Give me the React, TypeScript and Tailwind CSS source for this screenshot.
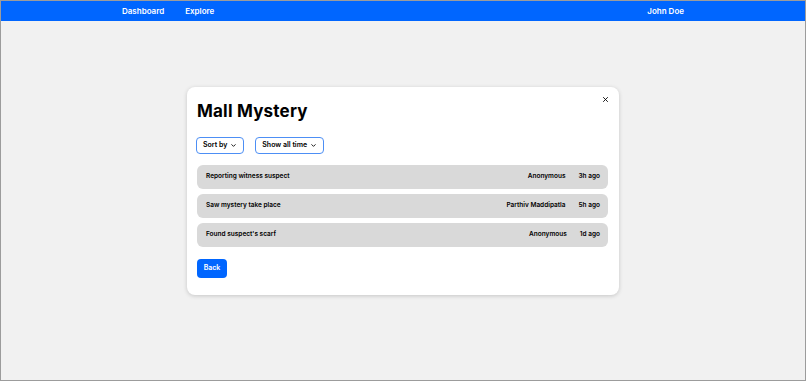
import React from 'react'

const rows = [
  { title: 'Reporting witness suspect', author: 'Anonymous', time: '3h ago' },
  { title: 'Saw mystery take place', author: 'Parthiv Maddipatla', time: '5h ago' },
  { title: "Found suspect's scarf", author: 'Anonymous', time: '1d ago' },
]

function Chevron() {
  return (
    <svg width="7" height="7" viewBox="0 0 24 24" fill="none" stroke="currentColor" strokeWidth="3" strokeLinecap="round" strokeLinejoin="round">
      <path d="M6 9l6 6 6-6" />
    </svg>
  )
}

export default function App() {
  return (
    <div
      className="h-[381px] w-[806px] border border-[#9c9c9c] bg-[#f1f1f1] flex flex-col overflow-hidden"
      style={{ fontFamily: 'Inter, "Noto Sans", sans-serif' }}
    >
      {/* Top bar */}
      <header className="h-[20px] shrink-0 bg-[#0066ff] flex items-center justify-between pl-[121px] pr-[121px] text-white text-[8px] font-semibold">
        <nav className="flex items-center gap-[21px]">
          <span>Dashboard</span>
          <span>Explore</span>
        </nav>
        <span>John Doe</span>
      </header>

      {/* Modal card */}
      <main className="flex justify-center pt-[66px]">
        <div className="relative w-[432px] bg-white rounded-[8px] shadow-[0_1px_4px_rgba(0,0,0,0.18)] pl-[10px] pr-[11px] pt-[12px] pb-[17px]">
          <button className="absolute right-[10px] top-[9px] text-black">
            <svg width="7" height="7" viewBox="0 0 24 24" fill="none" stroke="currentColor" strokeWidth="3" strokeLinecap="round">
              <path d="M5 5l14 14M19 5L5 19" />
            </svg>
          </button>

          <h1 className="text-[17px] font-bold text-black leading-[24px] tracking-[0.2px]">Mall Mystery</h1>

          <div className="flex items-center gap-[11px] mt-[14px] -ml-[1px]">
            <button className="h-[17px] px-[6px] flex items-center gap-[3px] border-[1.5px] border-[#4d8ff5] rounded-[4px] text-[7px] font-semibold text-black">
              Sort by <Chevron />
            </button>
            <button className="h-[17px] px-[6px] flex items-center gap-[3px] border-[1.5px] border-[#4d8ff5] rounded-[4px] text-[7px] font-semibold text-black">
              Show all time <Chevron />
            </button>
          </div>

          <div className="flex flex-col gap-[5px] mt-[11px]">
            {rows.map((r) => (
              <div key={r.title} className="h-[24px] bg-[#d9d9d9] rounded-[6px] flex items-center justify-between pl-[9px] pr-[8px] text-[6.5px] font-semibold text-black">
                <span>{r.title}</span>
                <div className="flex items-center gap-[13px]">
                  <span>{r.author}</span>
                  <span>{r.time}</span>
                </div>
              </div>
            ))}
          </div>

          <button className="mt-[12px] h-[19px] w-[30px] bg-[#0066ff] rounded-[4px] text-white text-[7px] font-semibold flex items-center justify-center">
            Back
          </button>
        </div>
      </main>
    </div>
  )
}
